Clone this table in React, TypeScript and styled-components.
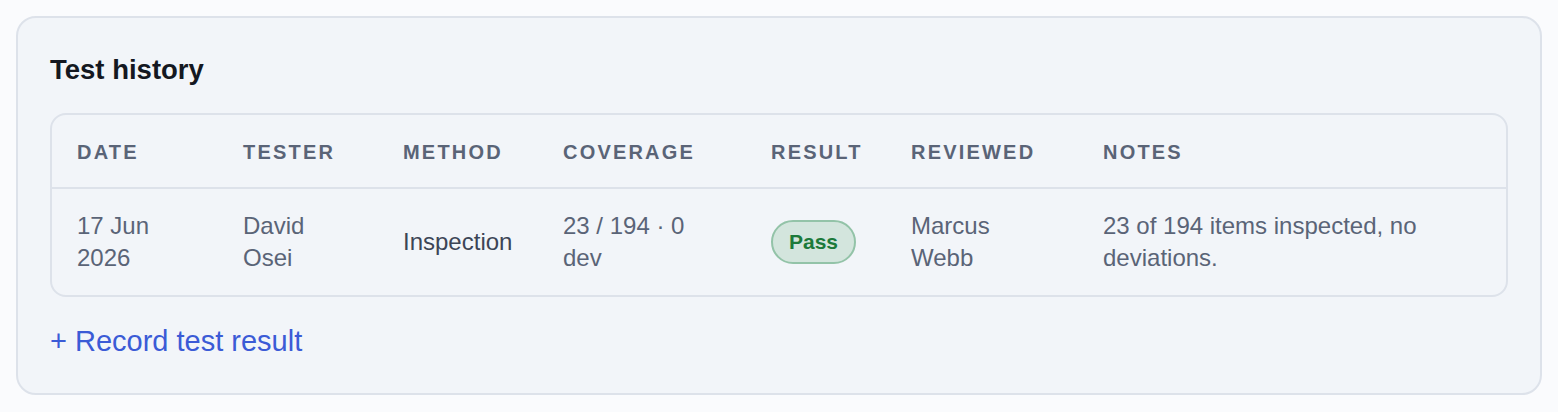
import styled, { createGlobalStyle } from 'styled-components';

const GlobalStyle = createGlobalStyle`
  body {
    margin: 0;
    background: #fafbfd;
    font-family: "Liberation Sans", Arial, Helvetica, sans-serif;
  }
`;

const Page = styled.div`
  padding: 16px;
`;

const Card = styled.section`
  background: #f2f5f9;
  border: 2px solid #dde2ea;
  border-radius: 20px;
  padding: 34px 32px 35px 32px;
`;

const Title = styled.h2`
  margin: 0 0 25px;
  font-size: 27.5px;
  line-height: 36px;
  font-weight: 700;
  color: #141821;
`;

const TableBox = styled.div`
  border: 2px solid #dde2ea;
  border-radius: 16px;
  overflow: hidden;
`;

const Table = styled.table`
  width: 100%;
  border-collapse: collapse;
  table-layout: fixed;
`;

const HeadCell = styled.th`
  text-align: left;
  padding: 24px 40px 22px 25px;
  font-size: 20px;
  line-height: 26px;
  font-weight: 700;
  letter-spacing: 2.2px;
  text-transform: uppercase;
  white-space: nowrap;
  color: #5a6477;
  border-bottom: 2px solid #dde2ea;
`;

const Cell = styled.td<{ $strong?: boolean }>`
  padding: 21px 40px 21px 25px;
  font-size: 24px;
  line-height: 32px;
  color: ${p => (p.$strong ? '#3c4556' : '#5a6477')};
  vertical-align: middle;
`;

const Badge = styled.span`
  display: inline-block;
  padding: 8px 16px;
  border: 2px solid #93c3a8;
  border-radius: 999px;
  background: #d3e5dd;
  color: #1c7a3a;
  font-size: 21px;
  line-height: 24px;
  font-weight: 700;
`;

const AddLink = styled.a`
  display: inline-block;
  margin-top: 27px;
  font-size: 29px;
  line-height: 34px;
  color: #3b5bd6;
  text-decoration: none;
  cursor: pointer;
`;

const columns = [
  { label: 'Date', width: 166 },
  { label: 'Tester', width: 160 },
  { label: 'Method', width: 160 },
  { label: 'Coverage', width: 208 },
  { label: 'Result', width: 140 },
  { label: 'Reviewed', width: 192 },
  { label: 'Notes' },
];

const rows = [
  {
    date: '17 Jun 2026',
    tester: 'David Osei',
    method: 'Inspection',
    coverage: '23 / 194 · 0 dev',
    result: 'Pass',
    reviewed: 'Marcus Webb',
    notes: '23 of 194 items inspected, no deviations.',
  },
];

export default function App() {
  return (
    <>
      <GlobalStyle />
      <Page>
        <Card>
          <Title>Test history</Title>
          <TableBox>
            <Table>
              <colgroup>
                {columns.map(c => (
                  <col key={c.label} style={c.width ? { width: c.width } : undefined} />
                ))}
              </colgroup>
              <thead>
                <tr>
                  {columns.map(c => (
                    <HeadCell key={c.label}>{c.label}</HeadCell>
                  ))}
                </tr>
              </thead>
              <tbody>
                {rows.map(r => (
                  <tr key={r.date}>
                    <Cell>{r.date}</Cell>
                    <Cell>{r.tester}</Cell>
                    <Cell $strong>{r.method}</Cell>
                    <Cell>{r.coverage}</Cell>
                    <Cell>
                      <Badge>{r.result}</Badge>
                    </Cell>
                    <Cell>{r.reviewed}</Cell>
                    <Cell>{r.notes}</Cell>
                  </tr>
                ))}
              </tbody>
            </Table>
          </TableBox>
          <AddLink>+ Record test result</AddLink>
        </Card>
      </Page>
    </>
  );
}
